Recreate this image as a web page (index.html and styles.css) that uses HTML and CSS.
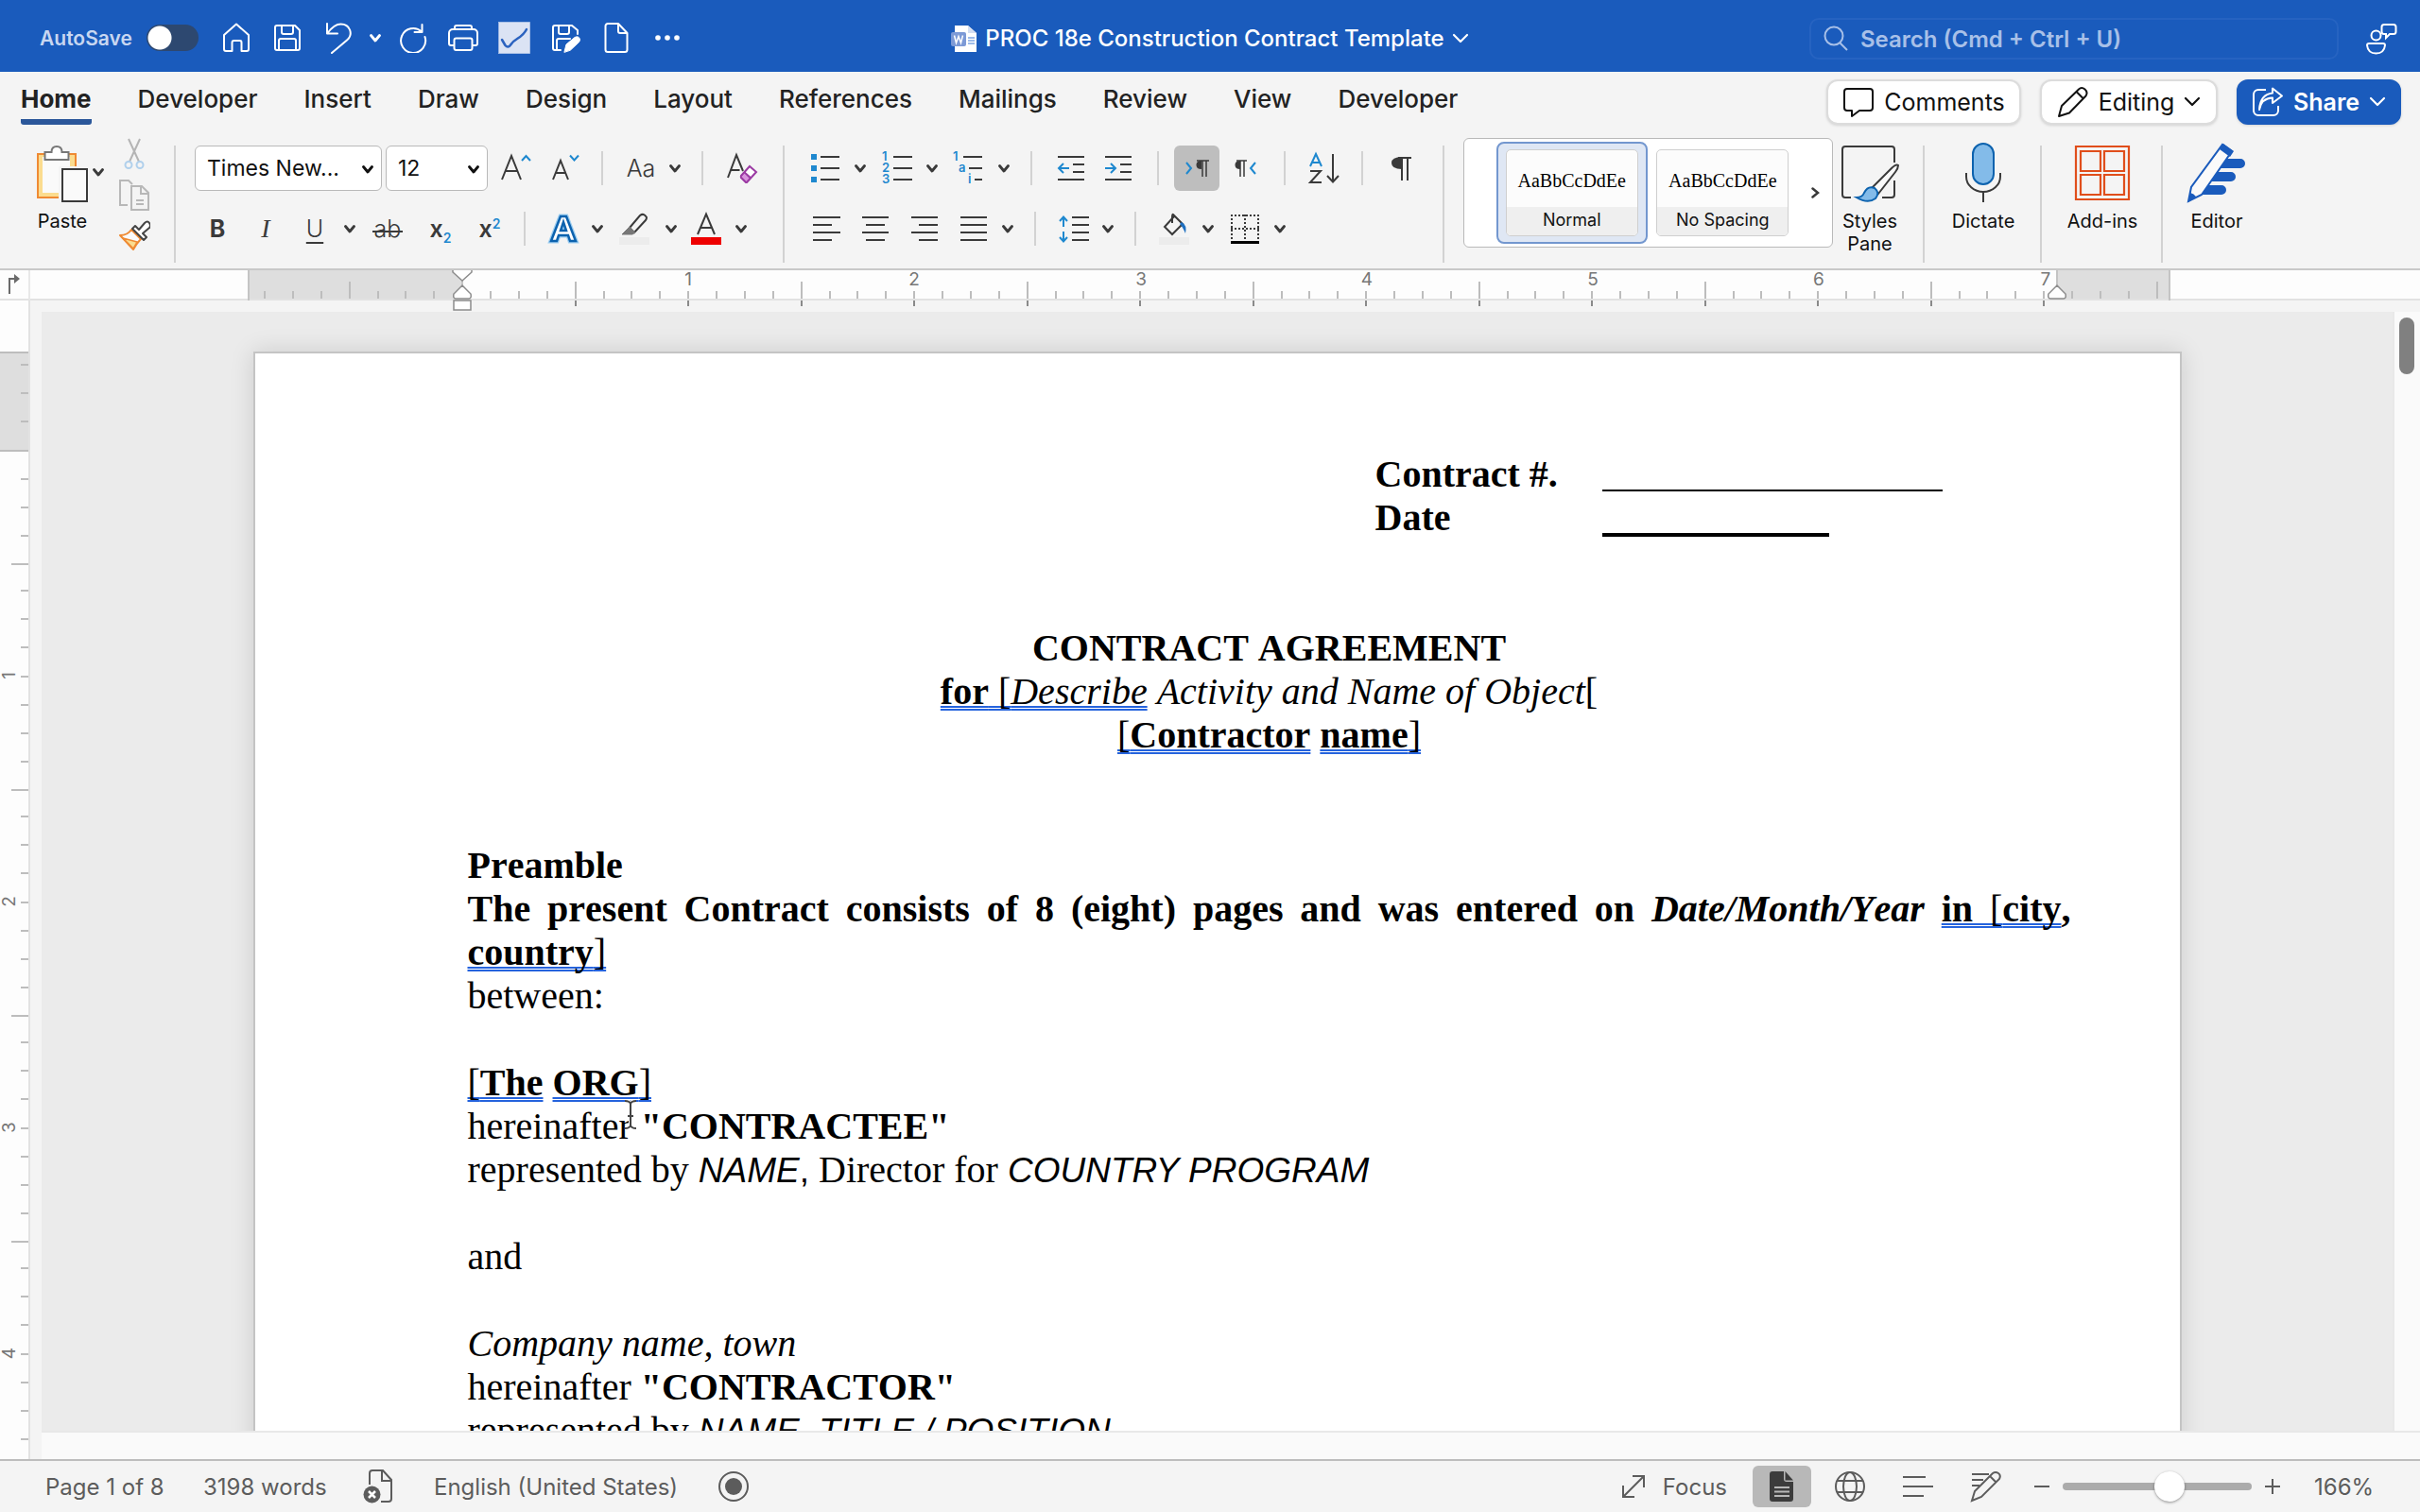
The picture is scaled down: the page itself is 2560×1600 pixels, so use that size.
FILE: index.html
```html
<!DOCTYPE html>
<html lang="en">
<head>
<meta charset="utf-8">
<title>PROC 18e Construction Contract Template</title>
<link rel="stylesheet" href="styles.css">
</head>
<body>
<svg class="defs" aria-hidden="true">
  <symbol id="chev" viewBox="0 0 12 9"><path d="M1.5 1.5 6 7l4.500-5.500" fill="none" stroke="currentColor" stroke-width="2.800" stroke-linecap="round" stroke-linejoin="round"/></symbol>
  <symbol id="chev-thin" viewBox="0 0 18 12"><path d="M2 2l7 7 7-7" fill="none" stroke="currentColor" stroke-width="2.200" stroke-linecap="round" stroke-linejoin="round"/></symbol>
</svg>
<div class="app">
  <header class="titlebar">
    <div class="quick">
      <label class="autosave">AutoSave <input type="checkbox" class="toggle"></label>
      <button class="qa" aria-label="Home"><svg width="32" height="32" viewBox="0 0 32 32"><path d="M3 13 16 1.500 29 13V28a2 2 0 0 1-2 2h-5.500V21a2 2 0 0 0-2-2h-6a2 2 0 0 0-2 2v9H5a2 2 0 0 1-2-2z"/></svg></button>
      <button class="qa" aria-label="Save"><svg width="32" height="32" viewBox="0 0 32 32"><path d="M5 3h19l5 5v19a2 2 0 0 1-2 2H5a2 2 0 0 1-2-2V5a2 2 0 0 1 2-2zM10 3v7a2 2 0 0 0 2 2h8a2 2 0 0 0 2-2V3M7 29V19a2 2 0 0 1 2-2h14a2 2 0 0 1 2 2v10"/></svg></button>
      <button class="qa" aria-label="Undo"><svg width="32" height="34" viewBox="0 0 32 34"><path d="M4 2v10.500h11M4.500 12C9 6 13 2.500 18.500 2.500c10 0 13.500 11 6.500 17L9 33"/></svg></button>
      <button class="qa-chev" aria-label="Undo history"><svg width="12" height="9"><use href="#chev"/></svg></button>
      <button class="qa" aria-label="Redo"><svg width="32" height="32" viewBox="0 0 32 32"><path d="M26.500 2v8H18.500M26 9.500A13 13 0 1 0 29.500 15"/></svg></button>
      <button class="qa" aria-label="Print"><svg width="34" height="32" viewBox="0 0 34 32"><path d="M8 6.500V5a2 2 0 0 1 2-2h14a2 2 0 0 1 2 2v1.500M7 24H4a2 2 0 0 1-2-2V11a4 4 0 0 1 4-4h22a4 4 0 0 1 4 4v11a2 2 0 0 1-2 2h-3M9.500 16.500h15a2 2 0 0 1 2 2V27a2 2 0 0 1-2 2h-15a2 2 0 0 1-2-2v-8.500a2 2 0 0 1 2-2z"/></svg></button>
      <button class="qa" aria-label="Accept"><svg width="34" height="34" viewBox="0 0 34 34"><rect x="0.500" y="0.500" width="33" height="33" fill="#dbe3f4" stroke="#a9c0e6" stroke-width="1"/><path d="M4 19l3.500 6q3 3.500 6-1C18 17 25 18 30 8" stroke="#2b62bf" stroke-width="2.500"/></svg></button>
      <button class="qa" aria-label="Save as"><svg width="32" height="32" viewBox="0 0 32 32"><path d="M11 29H5a2 2 0 0 1-2-2V5a2 2 0 0 1 2-2h18l6 5v4M9 3v7a2 2 0 0 0 2 2h7a2 2 0 0 0 2-2V3M7 29V19a2 2 0 0 1 2-2h12"/><path d="M15 31l2-8L26 15.500q4-2 5.500 2 0 2-1.500 3.500L21.500 29z" fill="#fff" stroke-width="1"/></svg></button>
      <button class="qa" aria-label="New document"><svg width="28" height="34" viewBox="0 0 28 34"><path d="M4.500 2H16l9.500 10V29.500a2.500 2.500 0 0 1-2.500 2.500H5a2.500 2.500 0 0 1-2.500-2.500V4.500A2.500 2.500 0 0 1 5 2M16 2v8a2 2 0 0 0 2 2h7.500"/></svg></button>
      <button class="qa" aria-label="More"><svg width="28" height="8" viewBox="0 0 28 8"><g fill="#fff" stroke="none"><circle cx="4" cy="4" r="2.800"/><circle cx="14" cy="4" r="2.800"/><circle cx="24" cy="4" r="2.800"/></g></svg></button>
    </div>
    <h1 class="doc-title">
      <svg width="28" height="30" viewBox="0 0 28 30"><path d="M4 1h14l9 8v20H4z" fill="#fff"/><path d="M18 1l9 8h-9z" fill="#d4def2"/><rect x="0" y="8" width="16" height="15" rx="2" fill="#7d9ad6"/><path d="M3.500 11.500l2 8 2.500-7 2.500 7 2-8" fill="none" stroke="#fff" stroke-width="1.500"/><path d="M18 14h7M18 17h7M18 20h7" stroke="#7fa6e3" stroke-width="1.500"/></svg>
      <span>PROC 18e Construction Contract Template</span>
      <svg width="18" height="12"><use href="#chev-thin"/></svg>
    </h1>
    <div class="title-right">
      <label class="search"><svg width="28" height="28" viewBox="0 0 28 28"><circle cx="12" cy="11" r="9.500"/><path d="M18.500 18.500 26 26"/></svg><input type="text" placeholder="Search (Cmd + Ctrl + U)" aria-label="Search"></label>
      <button class="people" aria-label="Presence"><svg width="34" height="34" viewBox="0 0 34 34"><path d="M20 2h10a2.500 2.500 0 0 1 2.500 2.500v5A2.500 2.500 0 0 1 30 12h-4l-4 4v-4h-2a2.500 2.500 0 0 1-2.500-2.500v-5A2.500 2.500 0 0 1 20 2z"/><circle cx="11.500" cy="13.500" r="5"/><path d="M4 22h15a2 2 0 0 1 2 2q-1 8.500-9.500 8.500T2 24a2 2 0 0 1 2-2z"/></svg></button>
    </div>
  </header>

  <div class="tabbar">
    <nav class="tabs">
      <a href="#" class="tab active">Home</a><a href="#" class="tab">Developer</a><a href="#" class="tab">Insert</a><a href="#" class="tab">Draw</a><a href="#" class="tab">Design</a><a href="#" class="tab">Layout</a><a href="#" class="tab">References</a><a href="#" class="tab">Mailings</a><a href="#" class="tab">Review</a><a href="#" class="tab">View</a><a href="#" class="tab">Developer</a>
    </nav>
    <div class="actions">
      <button class="pill comments"><svg width="34" height="32" viewBox="0 0 34 32"><path d="M5 2h24a3 3 0 0 1 3 3v17a3 3 0 0 1-3 3H18l-8 6v-6H5a3 3 0 0 1-3-3V5a3 3 0 0 1 3-3z"/></svg>Comments</button>
      <button class="pill editing"><svg width="34" height="34" viewBox="0 0 34 34"><path d="M2 32l3-11L23 3.500q3-3 6.500 0t1 7L13 28.500zM20.500 6l7.500 7.500"/></svg>Editing<svg width="18" height="12"><use href="#chev-thin"/></svg></button>
      <button class="pill share"><svg width="34" height="32" viewBox="0 0 34 32"><path d="M15 3H7a5 5 0 0 0-5 5v17a5 5 0 0 0 5 5h16a5 5 0 0 0 5-5v-5M8 24q2-12 14-12.500v5.500L32 9.500 22 1.500V6.500Q9 8 8 24z"/></svg>Share<svg width="18" height="12"><use href="#chev-thin"/></svg></button>
    </div>
  </div>

  <div class="ribbon">
    <section class="group clipboard">
      <button class="big paste"><svg width="56" height="60" viewBox="0 0 56 60"><path d="M2 9h40v46H2z" fill="#fbdc8f" stroke="#ef8a33" stroke-width="2"/><path d="M7 12h29v38H7z" fill="#fafafa"/><path d="M24 22h30v34H24z" fill="#f4f4f4"/><path d="M9.500 15V7h7q0-6 5.500-6t5.500 6h7v8z" fill="#fff" stroke="#777" stroke-width="2"/><path d="M28 25h26v34H28z" fill="#fafafa" stroke="#3a3a3a" stroke-width="2"/></svg>Paste</button>
      <button class="chev-btn" aria-label="Paste options"><svg width="12" height="9"><use href="#chev"/></svg></button>
      <div class="clip-tools">
        <button aria-label="Cut"><svg width="32" height="34" viewBox="0 0 32 34" fill="none"><path d="M10 1l11 24M22 1L11 25" stroke="#b4b4b4" stroke-width="2"/><circle cx="10" cy="28.500" r="3.500" stroke="#b0d0ec" stroke-width="2"/><circle cx="22" cy="28.500" r="3.500" stroke="#b0d0ec" stroke-width="2"/></svg></button>
        <button aria-label="Copy"><svg width="34" height="34" viewBox="0 0 34 34" fill="none" stroke="#b8b8b8" stroke-width="2"><path d="M10 28H2V2h9l4 4M14 8h11l7 7v18H14zM24 8v8h8M19 23h8M19 27h8"/></svg></button>
        <button aria-label="Format painter"><svg width="34" height="32" viewBox="0 0 34 32"><path d="M2 16q8 0 12-6l10 10q-4 4-8 11z" fill="#fafafa" stroke="#ef8a33" stroke-width="2" stroke-linejoin="round"/><path d="M5 19l15 4-4 7z" fill="#fbdc8f" stroke="#ef8a33" stroke-width="1.500"/><path d="M15 9l3-3 4 4 6-7q3-3 5 0t0 5l-7 6 4 4-3 3z" fill="#fff" stroke="#444" stroke-width="2" stroke-linejoin="round"/></svg></button>
      </div>
    </section>

    <section class="group font">
      <div class="row f1">
        <span class="combo name"><select aria-label="Font"><option>Times New...</option></select><svg width="12" height="9"><use href="#chev"/></svg></span>
        <span class="combo size"><select aria-label="Font size"><option>12</option></select><svg width="12" height="9"><use href="#chev"/></svg></span>
        <button aria-label="Increase font size"><svg width="32" height="32" viewBox="0 0 32 32"><path d="M2 28 12 3l10 25M5.500 19h13"/><path class="bl" d="M23 8l4.500-5L32 8"/></svg></button>
        <button aria-label="Decrease font size"><svg width="32" height="32" viewBox="0 0 32 32"><path d="M3 28 11 8l8 20M6 21h10"/><path class="bl" d="M21 2.500l4.500 5 4.500-5"/></svg></button>
        <i class="sep"></i>
        <button class="txt light" aria-label="Change case">Aa</button>
        <button aria-label="Case options"><svg width="12" height="9"><use href="#chev"/></svg></button>
        <i class="sep"></i>
        <button aria-label="Clear formatting"><svg width="32" height="32" viewBox="0 0 32 32"><path d="M1 26 10 2l7 17M4.500 18h9"/><path d="M15 24 24 14l7 6-10 11h-1l-5-5zM18 20l8 7" stroke="#9b3aa3" fill="#fff"/><path d="M14.500 25l4-4.500 6 6-4 4.500z" fill="#d893dd" stroke="#9b3aa3" stroke-width="1.500"/></svg></button>
      </div>
      <div class="row f2">
        <button class="txt b">B</button>
        <button class="txt it">I</button>
        <button class="txt u">U</button>
        <button aria-label="Underline options"><svg width="12" height="9"><use href="#chev"/></svg></button>
        <button class="txt s">ab</button>
        <button class="txt x"><span>x<sub>2</sub></span></button>
        <button class="txt x"><span>x<sup>2</sup></span></button>
        <i class="sep"></i>
        <button aria-label="Text effects"><svg width="32" height="32" viewBox="0 0 32 32"><path d="M3 29 13 3h6l10 26h-6l-2-6H11l-2 6zM13 18h6l-3-9z" stroke="#9bcdf0" stroke-width="5"/><path d="M3 29 13 3h6l10 26h-6l-2-6H11l-2 6zM13 18h6l-3-9z" fill="#fff" stroke="#0c62ae" stroke-width="2.500"/></svg></button>
        <button aria-label="Text effects options"><svg width="12" height="9"><use href="#chev"/></svg></button>
        <button aria-label="Highlight"><svg width="32" height="34" viewBox="0 0 32 34"><path d="M11 16 22 3q4-3 7 2 0 2-1 3L16 21z"/><path d="M3 23l8-8 6 6-3 2z" fill="#777" stroke="#777" stroke-width="1"/><path d="M0 26h32v8H0z" fill="#ececec" stroke="none"/></svg></button>
        <button aria-label="Highlight options"><svg width="12" height="9"><use href="#chev"/></svg></button>
        <button aria-label="Font color"><svg width="32" height="34" viewBox="0 0 32 34"><path d="M7 23 16 1.500 25 23M10 16h12"/><path d="M0 26h32v8H0z" fill="#ee0000" stroke="none"/></svg></button>
        <button aria-label="Font color options"><svg width="12" height="9"><use href="#chev"/></svg></button>
      </div>
    </section>

    <section class="group para">
      <div class="row p1">
        <button aria-label="Bullets"><svg width="32" height="32" viewBox="0 0 32 32"><path d="M11 4h20M11 16h20M11 28h20"/><path class="blf" d="M1 1h6v6H1zM1 13h6v6H1zM1 25h6v6H1z"/></svg></button>
        <button aria-label="Bullet options"><svg width="12" height="9"><use href="#chev"/></svg></button>
        <button aria-label="Numbering"><svg width="32" height="34" viewBox="0 0 32 34"><path d="M12 5h20M12 17h20M12 29h20"/><g class="num"><text x="0" y="9">1</text><text x="0" y="21">2</text><text x="0" y="33">3</text></g></svg></button>
        <button aria-label="Numbering options"><svg width="12" height="9"><use href="#chev"/></svg></button>
        <button aria-label="Multilevel list"><svg width="32" height="34" viewBox="0 0 32 34"><path d="M11 5h20M17 17h14M23 29h8"/><g class="num"><text x="0" y="9">1</text><text x="6" y="21">a</text><text x="16" y="33">i</text></g></svg></button>
        <button aria-label="Multilevel options"><svg width="12" height="9"><use href="#chev"/></svg></button>
        <i class="sep"></i>
        <button aria-label="Decrease indent"><svg width="30" height="30" viewBox="0 0 30 30"><path d="M1 3h28M17 11h12M17 19h12M1 27h28"/><path class="bl" d="M13 15H2M7 10l-5 5 5 5"/></svg></button>
        <button aria-label="Increase indent"><svg width="30" height="30" viewBox="0 0 30 30"><path d="M1 3h28M17 11h12M17 19h12M1 27h28"/><path class="bl" d="M1 15h11M7 10l5 5-5 5"/></svg></button>
        <i class="sep"></i>
        <button class="on" aria-label="Left to right"><svg width="26" height="20" viewBox="0 0 26 20"><path class="bl" d="M2 4l5 6-5 6"/><path d="M19 2v17M23 2v17M13 2h13" stroke-width="1.500"/><path d="M18 2v9q-5.500 0-5.500-4.500T18 2z" fill="#3a3a3a" stroke="none"/></svg></button>
        <button aria-label="Right to left"><svg width="26" height="20" viewBox="0 0 26 20"><path class="bl" d="M23 4l-5 6 5 6"/><path d="M7 2v17M11 2v17M3 2h11" stroke-width="1.500"/><path d="M7 2v9q-5.500 0-5.500-4.500T7 2z" fill="#3a3a3a" stroke="none"/></svg></button>
        <i class="sep"></i>
        <button aria-label="Sort"><svg width="34" height="34" viewBox="0 0 34 34"><path class="bl" d="M2 15 8 2l6 13M4 11h8"/><path d="M2 20h11L2 32h12M26 2v29M20 25l6 6.500 6-6.500"/></svg></button>
        <i class="sep"></i>
        <button aria-label="Show formatting"><svg width="22" height="26" viewBox="0 0 22 26"><path d="M12 2v24M18 2v24M8 2h14"/><path d="M12 1v13Q1 14 1 7.500T12 1z" fill="#3a3a3a" stroke="none"/></svg></button>
      </div>
      <div class="row p2">
        <button aria-label="Align left"><svg width="30" height="30" viewBox="0 0 30 30"><path d="M1 3h29M1 11h20M1 19h29M1 27h20"/></svg></button>
        <button aria-label="Center"><svg width="30" height="30" viewBox="0 0 30 30"><path d="M1 3h28M5 11h20M1 19h28M5 27h20"/></svg></button>
        <button aria-label="Align right"><svg width="30" height="30" viewBox="0 0 30 30"><path d="M1 3h28M9 11h20M1 19h28M9 27h20"/></svg></button>
        <button aria-label="Justify"><svg width="30" height="30" viewBox="0 0 30 30"><path d="M1 3h28M1 11h28M1 19h28M1 27h28"/></svg></button>
        <button aria-label="Justify options"><svg width="12" height="9"><use href="#chev"/></svg></button>
        <i class="sep"></i>
        <button aria-label="Line spacing"><svg width="34" height="30" viewBox="0 0 34 30"><path d="M15 3h18M15 11h18M15 19h18M15 27h18"/><path class="bl" d="M6 13V3M2 7l4-4.500L10 7M6 18v10M2 24l4 4.500 4-4.500"/></svg></button>
        <button aria-label="Spacing options"><svg width="12" height="9"><use href="#chev"/></svg></button>
        <i class="sep"></i>
        <button aria-label="Shading"><svg width="32" height="34" viewBox="0 0 32 34"><path d="M16 4 6 15l8 8 11-11-9-9q-2-3-2 2v6"/><path d="M24 10q6 3 4 12-3-7-6-10z" fill="#1e6fc0" stroke="none"/><path d="M0 26h32v8H0z" fill="#ececec" stroke="none"/></svg></button>
        <button aria-label="Shading options"><svg width="12" height="9"><use href="#chev"/></svg></button>
        <button aria-label="Borders"><svg width="32" height="32" viewBox="0 0 32 32"><path d="M1 2h30M1 16h30M2 1v27M16 1v27M30 1v27" stroke-dasharray="2 2"/><path d="M1 30.500h30" stroke="#000" stroke-width="3"/></svg></button>
        <button aria-label="Border options"><svg width="12" height="9"><use href="#chev"/></svg></button>
      </div>
    </section>

    <section class="group styles">
      <div class="gallery">
        <button class="tile selected"><span class="tile-in"><span class="sample">AaBbCcDdEe</span><span class="cap">Normal</span></span></button>
        <button class="tile"><span class="tile-in"><span class="sample">AaBbCcDdEe</span><span class="cap">No Spacing</span></span></button>
        <button class="more" aria-label="More styles"><svg width="9" height="12" viewBox="0 0 9 12"><path d="M1.500 1.500 7 6l-5.500 4.500" fill="none" stroke="#3a3a3a" stroke-width="2.500" stroke-linecap="round"/></svg></button>
      </div>
      <button class="big pane"><svg width="62" height="60" viewBox="0 0 62 60"><path d="M57 18V4a3 3 0 0 0-3-3H5a3 3 0 0 0-3 3v48a3 3 0 0 0 3 3h6M44 55h10a3 3 0 0 0 3-3V37" fill="none" stroke="#3a3a3a" stroke-width="2"/><path d="M34 44 54 24q5-5 7-3 0 3-3 7L40 51z" fill="#fafafa" stroke="#3a3a3a" stroke-width="2"/><path d="M17 55q6 0 8-5 4-8 11-5 6 5 1 11-8 6-20-1z" fill="#83bbe9" stroke="#0c62ae" stroke-width="2"/></svg>Styles<br>Pane</button>
    </section>
    <section class="group dictate"><button class="big"><svg width="40" height="60" viewBox="0 0 40 60"><path d="M2 29v4a18 16 0 0 0 36 0v-4M20 49v11" fill="none" stroke="#3a3a3a" stroke-width="2"/><rect x="9" y="-2" width="22" height="43" rx="11" fill="#83bbe9" stroke="#0c62ae" stroke-width="2"/></svg>Dictate</button></section>
    <section class="group addins"><button class="big"><svg width="58" height="60" viewBox="0 0 58 60"><path d="M1 1h56v56H1zM6 6h21v21H6zM31 6h21v21H31zM6 31h21v21H6zM31 31h21v21H31z" fill="none" stroke="#e04e1b" stroke-width="2.200"/></svg>Add-ins</button></section>
    <section class="group editor"><button class="big"><svg width="62" height="60" viewBox="0 0 62 60"><path d="M38 14h18a5 5 0 0 1 0 10H30zM30 28h16a5 5 0 0 1 0 10H22zM22 42h14a5 5 0 0 1 0 10H14z" fill="#1a5bbc"/><path d="M1 59 4 44 37-1l10 7-32 46z" fill="#fafafa" stroke="#1a5bbc" stroke-width="2"/><path d="M34 4l4-6 11 8-4 6zM1 60l2-10q4 1 6 4z" fill="#1a5bbc"/></svg>Editor</button></section>
  </div>

  <main class="workspace">
    <div class="corner"><svg width="14" height="22" viewBox="0 0 14 22"><path d="M2 21V5h6" fill="none" stroke="#6a6a6a" stroke-width="2"/><path d="M7 0l6 5-6 5z" fill="#6a6a6a"/></svg></div>
    <div class="hruler">
      <svg width="2036" height="44" viewBox="0 0 2036 44">
        <defs>
          <pattern id="ht" patternUnits="userSpaceOnUse" x="212" y="0" width="239" height="44"><path d="M15 22v8M45 22v8M75 22v8M105 22v8M135 12v18M165 22v8M194 22v8M224 22v8" stroke="#bdbdbd" stroke-width="2"/></pattern>
          <pattern id="hb" patternUnits="userSpaceOnUse" x="212" y="0" width="239" height="44"><path d="M15 32v6M135 32v6" stroke="#8a8a8a" stroke-width="2"/></pattern>
        </defs>
        <path d="M0 0h227v30H0zM1914 0h120v30H1914z" fill="#dedede"/>
        <path d="M1 0v32M227 0v30M1914 0v30M2033 0v32" stroke="#c4c4c4" stroke-width="2"/>
        <path d="M4 0h2026v44H4z" fill="url(#ht)"/><path d="M240 0h1670v44H240z" fill="url(#hb)"/>
        <g class="labels"><text x="466" y="16">1</text><text x="705" y="16">2</text><text x="945" y="16">3</text><text x="1184" y="16">4</text><text x="1423" y="16">5</text><text x="1662" y="16">6</text><text x="1902" y="16">7</text></g>
        <g fill="#fff" stroke="#8c8c8c" stroke-width="1.500"><path d="M217 0v2l10 9 10-9V0M227 16l9 9q1 5-2 5h-14q-3 0-2-5zM218 32h18v10h-18zM1914 16l9 9q1 5-2 5h-14q-3 0-2-5z"/></g>
      </svg>
    </div>
    <div class="vruler">
      <svg width="30" height="1172" viewBox="0 0 30 1172">
        <defs><pattern id="vt" patternUnits="userSpaceOnUse" x="0" y="90" width="30" height="239"><path d="M22 15h8M22 45h8M22 75h8M22 105h8M12 135h18M22 163h8M22 193h8M22 223h8" stroke="#bdbdbd" stroke-width="2"/></pattern></defs>
        <path d="M0 0h30v105H0z" fill="#dedede"/><path d="M0 1h30M0 105h30" stroke="#bdbdbd" stroke-width="2"/>
        <path d="M0 5h30v1167H0z" fill="url(#vt)"/>
        <g class="labels"><text transform="translate(16 343) rotate(-90)">1</text><text transform="translate(16 582) rotate(-90)">2</text><text transform="translate(16 821) rotate(-90)">3</text><text transform="translate(16 1060) rotate(-90)">4</text></g>
      </svg>
    </div>
    <div class="stage">
      <div class="canvas">
        <article class="page">
          <dl class="meta"><dt>Contract #.</dt><dd><i class="blank"></i></dd><dt>Date</dt><dd><i class="blank short"></i></dd></dl>
          <h2>CONTRACT AGREEMENT</h2>
          <p class="center"><span class="g"><b>for</b> [<em>Describe</em></span> <em>Activity and Name of Object</em>[</p>
          <p class="center"><span class="g">[<b>Contractor</b></span> <span class="g"><b>name</b>]</span></p>
          <h3>Preamble</h3>
          <p class="just"><b>The present Contract consists of 8 (eight) pages and was entered on <em>Date/Month/Year</em> <span class="g">in <span class="n">[</span>city</span>, <span class="g">country<span class="n">]</span></span></b></p>
          <p>between:</p>
          <p class="gap"><span class="g">[<b>The</b></span> <span class="g"><b>ORG</b>]</span></p>
          <p>hereinafter <b>"CONTRACTEE"</b></p>
          <p>represented by <span class="sans"><em>NAME</em>,</span> Director for <em class="sans">COUNTRY PROGRAM</em></p>
          <p class="gap">and</p>
          <p class="gap"><em>Company name, town</em></p>
          <p>hereinafter <b>"CONTRACTOR"</b></p>
          <p>represented by <em class="sans">NAME, TITLE / POSITION</em></p>
          <svg class="ibeam" width="16" height="34" viewBox="0 0 16 34"><path d="M2 2q5 0 6 3 1-3 6-3M2 31q5 0 6-3 1 3 6 3M8 5v23M5 18h6" fill="none" stroke="#fff" stroke-width="4"/><path d="M2 2q5 0 6 3 1-3 6-3M2 31q5 0 6-3 1 3 6 3M8 5v23M5 18h6" fill="none" stroke="#444" stroke-width="2"/></svg>
        </article>
      </div>
      <div class="vscroll"><div class="thumb"></div></div>
      <div class="hscroll"></div>
    </div>
  </main>

  <footer class="status">
    <span class="pages">Page 1 of 8</span>
    <span class="words">3198 words</span>
    <button aria-label="Proofing errors"><svg width="32" height="36" viewBox="0 0 32 36"><path d="M7 16V4a3 3 0 0 1 3-3h11l9 10v20a3 3 0 0 1-3 3h-8M20 1v11h10"/><circle cx="9.500" cy="26.500" r="9" fill="#5c5c5c" stroke="none"/><path d="M6 23l7 7M13 23l-7 7" stroke="#fff" stroke-width="2.500"/></svg></button>
    <span class="lang">English (United States)</span>
    <button aria-label="Record macro"><svg width="32" height="32" viewBox="0 0 32 32"><circle cx="16" cy="16" r="15"/><circle cx="16" cy="16" r="9" fill="#5c5c5c" stroke="none"/></svg></button>
    <button class="focus"><svg width="26" height="26" viewBox="0 0 26 26"><path d="M2 12v12h12M2 24 24 2M12 2h12v12"/></svg>Focus</button>
    <div class="views">
      <button class="active" aria-label="Print layout"><svg width="26" height="32" viewBox="0 0 26 32"><path d="M3 0h12v8a3 3 0 0 0 3 3h7v18a3 3 0 0 1-3 3H3a3 3 0 0 1-3-3V3a3 3 0 0 1 3-3zM16.500 0 25 9.500h-8.500z" fill="#3c3c3c" stroke="none"/><path d="M5 17h16M5 21.500h16M5 26h16" stroke="#b8b8b8"/></svg></button>
      <button aria-label="Web layout"><svg width="34" height="32" viewBox="0 0 34 32"><circle cx="17" cy="16" r="15"/><ellipse cx="17" cy="16" rx="7" ry="15"/><path d="M3 10h28M3 22h28"/></svg></button>
      <button aria-label="Outline"><svg width="32" height="24" viewBox="0 0 32 24"><path d="M0 2h24M0 12h32M0 22h22"/></svg></button>
      <button aria-label="Draft"><svg width="34" height="34" viewBox="0 0 34 34"><path d="M2 4h18M2 10h12M2 16h8M2 32l3-10L24 3q3-2 6 0t1 6L12 28zM21 6l7 7"/></svg></button>
    </div>
    <button class="zoom-btn" aria-label="Zoom out"><svg width="16" height="16" viewBox="0 0 16 16"><path d="M0 8h16"/></svg></button>
    <input type="range" min="0" max="100" value="58" aria-label="Zoom">
    <button class="zoom-btn" aria-label="Zoom in"><svg width="16" height="16" viewBox="0 0 16 16"><path d="M0 8h16M8 0v16"/></svg></button>
    <span class="pct">166%</span>
  </footer>
</div>
</body>
</html>
```
FILE: styles.css
```css
* { box-sizing: border-box; }
html, body { margin: 0; height: 100%; }
body { font-family: Inter, "Liberation Sans", sans-serif; color: #111; overflow: hidden; }
button, input, select { font: inherit; color: inherit; }
button { border: 0; background: none; padding: 0; margin: 0; }
svg { display: block; flex: none; }
.defs { position: absolute; width: 0; height: 0; }
.app { display: flex; flex-direction: column; height: 100vh; background: #f4f4f4; }

/* Title bar */
.titlebar { display: grid; grid-template-columns: 1fr auto 1fr; align-items: center; flex: none; height: 76px; background: #1a5bbc; color: #fff; }
.quick { display: flex; align-items: center; padding-left: 42px; height: 80px; }
.autosave { display: flex; align-items: center; justify-content: space-between; width: 168px; margin-right: 13px; color: #c8d7f1; font-size: 21px; font-weight: 600; }
.toggle { appearance: none; margin: 0; width: 55px; height: 28px; border-radius: 14px; background: radial-gradient(circle at 14px 14px, #fff 12px, transparent 13px), #2d4870; }
.qa { width: 54px; height: 40px; display: grid; place-items: center; }
.qa svg { fill: none; stroke: #fff; stroke-width: 2; stroke-linejoin: round; stroke-linecap: round; }
.qa-chev { width: 24px; height: 40px; display: grid; place-items: center; }
.doc-title { display: flex; align-items: center; gap: 8px; margin: 0; padding-top: 2px; font-size: 24px; font-weight: 500; line-height: 32px; }
.title-right { display: flex; align-items: center; justify-content: flex-end; gap: 28px; padding: 2px 24px 0 0; }
.search { display: flex; align-items: center; gap: 12px; width: 560px; height: 44px; padding: 0 12px; border: 2px solid #2663c1; border-radius: 10px; }
.search svg { fill: none; stroke: #a8c0e8; stroke-width: 2; }
.search input { flex: 1; border: 0; outline: 0; background: none; padding: 0; font-size: 24px; font-weight: 600; }
.search input::placeholder { color: #a8c0e8; opacity: 1; }
.people svg { fill: none; stroke: #fff; stroke-width: 2; }

/* Tabs */
.tabbar { display: flex; justify-content: space-between; flex: none; height: 70px; padding: 8px 20px 0 22px; }
.tabs { display: flex; gap: 49px; padding-top: 5px; }
.tab { height: 43px; line-height: 32px; color: #222; font-size: 26px; font-weight: 500; text-decoration: none; white-space: nowrap; }
.tab.active { border-bottom: 6px solid #2b579a; border-radius: 3px; font-weight: 700; }
.actions { display: flex; }
.pill { display: flex; align-items: center; justify-content: center; gap: 10px; height: 48px; border: 2px solid #dcdcdc; border-radius: 12px; background: #fff; box-shadow: 0 1px 3px #0002; font-size: 25px; white-space: nowrap; }
.pill svg { fill: none; stroke: currentColor; stroke-width: 2; stroke-linejoin: round; }
.comments { width: 206px; margin-right: 20px; }
.editing { width: 188px; margin-right: 20px; }
.share { width: 174px; background: #1a5bbc; border-color: #1a5bbc; color: #fff; font-weight: 600; }

/* Ribbon */
.ribbon { display: flex; flex: none; height: 140px; border-bottom: 2px solid #c8c8c8; }
.group { position: relative; flex: none; padding-top: 8px; }
.group:not(.editor)::after { content: ""; position: absolute; right: 0; top: 8px; width: 2px; height: 124px; background: #d2d2d2; }
.ribbon button { display: grid; place-items: center; color: #3a3a3a; }
.ribbon .big { align-content: start; gap: 8px; height: 124px; color: #111; font-size: 20px; line-height: 24px; text-align: center; }
.ribbon .big svg { overflow: visible; }
.clipboard { display: grid; grid-template-columns: 60px 16px 60px; padding-left: 36px; width: 186px; }
.clipboard .chev-btn { height: 56px; }
.clip-tools { display: grid; grid-template-rows: 34px 52px 34px; margin-top: -8px; }
.row { display: grid; height: 48px; margin-bottom: 16px; align-items: center; }
.row > button { height: 48px; width: 100%; }
.row svg { fill: none; stroke: #3a3a3a; stroke-width: 2; overflow: visible; }
.row svg .bl { stroke: #1e88cf; stroke-width: 2; }
.row svg .blf { fill: #1e88cf; stroke: none; }
.num { fill: #1e88cf; stroke: none; font-size: 13px; font-weight: 600; }
.sep { justify-self: center; width: 2px; height: 36px; background: #d2d2d2; }
.font { width: 644px; padding-left: 20px; }
.f1 { grid-template-columns: 202px 110px 54px 52px 26px 56px 16px 42px 42px; }
.f2 { grid-template-columns: 48px 54px 50px 24px 56px 56px 48px 26px 56px 16px 62px 16px 58px 16px; }
.para { width: 698px; padding-left: 16px; }
.p1 { grid-template-columns: 54px 20px 58px 16px 60px 16px 42px 42px 58px 26px 56px 48px 34px 50px 30px 52px; }
.p2 { grid-template-columns: 56px 48px 56px 48px 24px 34px 48px 24px 34px 48px 24px 54px 20px; }
.combo { position: relative; height: 48px; }
.combo.name { width: 198px; }
.combo.size { width: 108px; }
.combo select { appearance: none; width: 100%; height: 48px; padding: 0 12px; border: 1px solid #b9b9b9; border-radius: 6px; background: #fff; color: #111; font-size: 23px; }
.combo svg { position: absolute; right: 9px; top: 21px; }
.ribbon .on { justify-self: center; width: 48px; border-radius: 6px; background: #bebebe; }
.txt { font-size: 25px; line-height: 28px; }
.txt.light { font-weight: 300; }
.txt.b { font-weight: 700; }
.txt.it { font-family: "Liberation Serif", serif; font-style: italic; font-size: 28px; }
.txt.u { font-weight: 300; text-decoration: underline 2px; text-underline-offset: 5px; }
.txt.s { font-weight: 300; background: linear-gradient(#3a3a3a, #3a3a3a) center 26px / 32px 2px no-repeat; }
.txt.x { font-weight: 600; }
.txt sub, .txt sup { color: #1e88cf; font-size: 14px; line-height: 0; }
.styles { display: flex; padding: 0 2px 0 20px; width: 508px; }
.gallery { display: flex; flex: none; width: 391px; height: 116px; padding: 3px 0 3px 34px; border: 1px solid #b9b9b9; border-radius: 6px; background: #fff; }
.tile { width: 160px; height: 108px; border: 2px solid transparent; border-radius: 8px; }
.tile.selected { border-color: #7397cf; background: #dfe7f4; }
.tile-in { display: flex; flex-direction: column; width: 140px; height: 92px; border: 1px solid #cfcfcf; border-radius: 5px; overflow: hidden; background: #fcfcfc; }
.sample { flex: 1; padding-top: 20px; font: 20px/24px "Liberation Serif", serif; color: #000; }
.cap { height: 30px; background: #efefef; color: #111; font-size: 18px; line-height: 28px; }
.more { width: 36px; height: 108px; }
.big.pane { width: 78px; margin-top: 8px; }
.dictate { width: 124px; }
.addins { width: 128px; }
.editor { width: 114px; }
.dictate .big, .addins .big, .editor .big { width: 100%; }

/* Workspace */
.workspace { display: grid; grid-template: 32px minmax(0, 1fr) / 32px minmax(0, 1fr); flex: 1; min-height: 0; }
.corner, .hruler { background: #fdfdfd; border-bottom: 2px solid #e2e2e2; }
.corner { padding: 4px 0 0 8px; border-right: 2px solid #e8e8e8; }
.hruler { padding-left: 230px; }
.hruler svg { position: relative; z-index: 1; overflow: visible; }
.vruler { background: #fdfdfd; border-right: 2px solid #e2e2e2; padding-top: 54px; overflow: hidden; }
.labels { fill: #777; font-size: 19px; text-anchor: middle; }
.stage { display: grid; grid-template: minmax(0, 1fr) 30px / minmax(0, 1fr) 29px; padding: 12px 0 0 12px; min-height: 0; }
.canvas { background: #ebebeb; overflow: hidden; }
.vscroll { background: #fafafa; border-left: 2px solid #e8e8e8; padding: 6px 5px; }
.thumb { width: 16px; height: 60px; border-radius: 8px; background: #808080; }
.hscroll { grid-column: 1 / -1; background: #fafafa; border-top: 2px solid #e8e8e8; }

/* Document */
.page { position: relative; max-width: 2040px; min-height: 2640px; margin: 42px auto 0; padding: 105px 115px 0 225px; border: 2px solid #c4c4c4; background: #fff; box-shadow: 0 0 24px #0002; color: #000; font: 40px/46px "Liberation Serif", "Times New Roman", serif; font-kerning: none; }
.page p, .page h2, .page h3 { margin: 0; font-size: 40px; }
.page h2 { margin-top: 92px; text-align: center; }
.page h3 { margin-top: 92px; }
.page p.gap { margin-top: 46px; }
.center { text-align: center; }
.just { text-align: justify; }
.n { font-weight: 400; }
.sans { font-family: "Liberation Sans", Arial, sans-serif; font-size: 37px; line-height: 0; font-kerning: normal; }
.g { text-decoration: underline double #2563dd 2px; text-underline-offset: 2px; text-decoration-skip-ink: none; }
.meta { display: grid; grid-template-columns: 240px 360px; margin: 0 0 0 960px; font-weight: 700; }
.meta dd { margin: 0; height: 46px; }
.blank { display: block; height: 41px; border-bottom: 2px solid #000; }
.blank.short { width: 240px; height: 43px; border-bottom-width: 4px; }
.ibeam { position: absolute; left: 389px; top: 789px; }

/* Status bar */
.status { display: flex; align-items: center; flex: none; height: 56px; padding: 0 50px 0 48px; border-top: 2px solid #bdbdbd; color: #5c5c5c; font-size: 24px; white-space: nowrap; }
.status svg { fill: none; stroke: #5c5c5c; stroke-width: 2; }
.pages { width: 167px; }
.words { width: 169px; }
.lang { width: 301px; margin-left: 43px; }
.focus { display: flex; align-items: center; gap: 18px; margin-left: auto; }
.views { display: flex; gap: 10px; margin: 0 20px 0 27px; }
.views button { display: grid; place-items: center; width: 62px; height: 44px; border-radius: 6px; }
.views .active { background: #b8b8b8; }
.status input { appearance: none; width: 200px; height: 8px; margin: 0 14px; border-radius: 4px; background: #ababab; }
.status input::-webkit-slider-thumb { appearance: none; width: 32px; height: 32px; border-radius: 50%; background: #fff; box-shadow: 0 1px 3px #0006; }
.pct { width: 62px; margin-left: 36px; }
```
